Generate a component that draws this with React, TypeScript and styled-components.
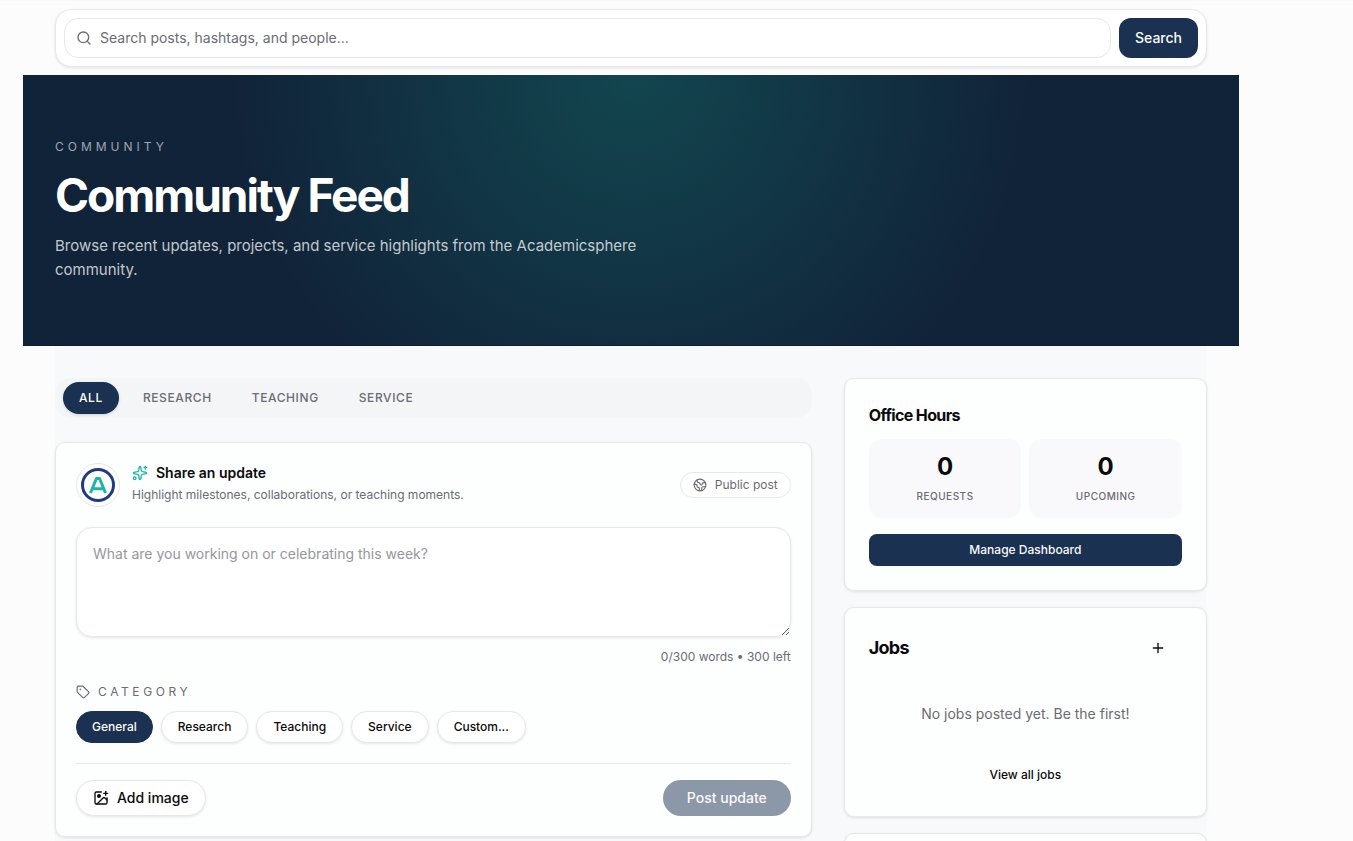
import React from "react";
import styled, { createGlobalStyle, css } from "styled-components";
import { Earth, ImagePlus, Plus, Search, Sparkles, Tag } from "lucide-react";

const navy = "#1a3152";
const ink = "#0a0a0c";
const muted = "#6b6b74";
const line = "#e8e8ea";

const GlobalStyle = createGlobalStyle`
  *, *::before, *::after { box-sizing: border-box; }
  body {
    margin: 0;
    background: #fcfcfc;
    color: ${ink};
    font-family: Inter, "Liberation Sans", sans-serif;
    font-size: 14px;
    line-height: 20px;
  }
  h1, h2, p { margin: 0; }
  button, input, textarea { font: inherit; color: inherit; }
  button { cursor: pointer; border: 0; }
`;

const Page = styled.div`
  height: 100vh;
  overflow-y: auto;
  scrollbar-width: none;
  padding: 8px 91px 0 0;
  border-top: 1px solid #f8f8f8;
`;

const Container = styled.main`
  max-width: 1216px;
  margin: 0 auto;
`;

const SearchBar = styled.form`
  display: flex;
  gap: 8px;
  margin: 0 32px 8px;
  padding: 8px;
  border: 1px solid ${line};
  border-radius: 16px;
  background: #fff;
  box-shadow: 0 1px 3px rgba(0, 0, 0, 0.1);
`;

const SearchField = styled.label`
  flex: 1;
  display: flex;
  align-items: center;
  gap: 8px;
  height: 40px;
  padding: 0 11px;
  border: 1px solid ${line};
  border-radius: 14px;
  color: ${muted};
`;

const SearchInput = styled.input`
  flex: 1;
  min-width: 0;
  padding: 0;
  border: 0;
  outline: 0;
  background: transparent;
  &::placeholder { color: ${muted}; opacity: 1; }
`;

const SearchButton = styled.button`
  padding: 0 16px;
  border-radius: 12px;
  background: ${navy};
  color: #fafafa;
  font-weight: 500;
`;

const Hero = styled.header`
  padding: 64px 32px 63px;
  border-bottom: 1px solid #0f1d33;
  background: radial-gradient(circle at top, #12464f, #112339 60%) #112339;
  color: #fff;
`;

const Eyebrow = styled.p`
  color: rgba(255, 255, 255, 0.6);
  font-size: 12px;
  line-height: 16px;
  letter-spacing: 4px;
  text-transform: uppercase;
`;

const HeroTitle = styled.h1`
  margin: 16px 0 15px;
  font-size: 46px;
  line-height: 48px;
  font-weight: 700;
  letter-spacing: -2px;
`;

const HeroText = styled.p`
  max-width: 640px;
  color: rgba(255, 255, 255, 0.75);
  font-size: 15px;
  line-height: 24px;
`;

const Content = styled.div`
  display: grid;
  grid-template-columns: minmax(0, 25fr) minmax(0, 12fr);
  align-items: start;
  gap: 32px;
  margin: 0 32px;
  padding: 32px 0;
  background: #f8f9fb;
`;

const Column = styled.div<{ $gap: number }>`
  display: flex;
  flex-direction: column;
  gap: ${(p) => p.$gap}px;
`;

const Tabs = styled.nav`
  display: flex;
  gap: 8px;
  padding: 4px 8px;
  border-radius: 16px;
  background: #f4f5f7;
`;

const TabButton = styled.button<{ $active?: boolean }>`
  height: 32px;
  padding: 0 16px;
  border-radius: 16px;
  background: transparent;
  color: ${muted};
  font-size: 12px;
  font-weight: 500;
  letter-spacing: 0.05em;
  text-transform: uppercase;
  ${(p) =>
    p.$active &&
    css`
      background: ${navy};
      color: #fff;
      box-shadow: 0 1px 3px rgba(0, 0, 0, 0.15);
    `}
`;

const Card = styled.section<{ $pad: number }>`
  padding: ${(p) => p.$pad}px;
  border: 1px solid ${line};
  border-radius: 10px;
  background: #fdfefe;
  box-shadow: 0 1px 3px rgba(0, 0, 0, 0.1);
`;

const ComposerHead = styled.div`
  display: flex;
  align-items: center;
  gap: 12px;
  margin-bottom: 20px;
`;

const Avatar = styled.span`
  display: flex;
  align-items: center;
  justify-content: center;
  width: 44px;
  height: 44px;
  border: 1px solid ${line};
  border-radius: 50%;
  background: #fff;
`;

const ComposerIntro = styled.div`
  flex: 1;
  align-self: flex-start;
`;

const ComposerTitle = styled.h2`
  display: flex;
  align-items: center;
  gap: 8px;
  margin-bottom: 4px;
  font-size: 14px;
  line-height: 20px;
  font-weight: 600;
  svg { color: #1fb9a5; }
`;

const SmallText = styled.p<{ $end?: boolean }>`
  color: ${muted};
  font-size: 12px;
  line-height: 16px;
  text-align: ${(p) => (p.$end ? "right" : "left")};
`;

const Visibility = styled.span`
  display: flex;
  align-items: center;
  gap: 8px;
  padding: 4px 12px;
  border: 1px solid ${line};
  border-radius: 16px;
  background: #fff;
  color: ${muted};
  font-size: 12px;
  line-height: 16px;
`;

const UpdateInput = styled.textarea`
  display: block;
  width: 100%;
  height: 110px;
  margin-bottom: 12px;
  padding: 16px;
  border: 1px solid ${line};
  border-radius: 16px;
  outline: 0;
  background: #fff;
  box-shadow: 0 1px 3px rgba(0, 0, 0, 0.1);
  resize: vertical;
  &::placeholder { color: #96969c; opacity: 1; }
`;

const CategoryLabel = styled.p`
  display: flex;
  align-items: center;
  gap: 8px;
  margin: 19px 0 11px;
  color: ${muted};
  font-size: 12px;
  line-height: 16px;
  letter-spacing: 0.3em;
  text-transform: uppercase;
`;

const Chips = styled.div`
  display: flex;
  flex-wrap: wrap;
  gap: 8px;
  margin-bottom: 20px;
`;

const Chip = styled.button<{ $active?: boolean }>`
  height: 32px;
  padding: 0 16px;
  border: 1px solid ${line};
  border-radius: 16px;
  background: #fff;
  box-shadow: 0 1px 3px rgba(0, 0, 0, 0.1);
  font-size: 12px;
  font-weight: 500;
  ${(p) =>
    p.$active &&
    css`
      padding: 0 15px;
      border-color: ${navy};
      background: ${navy};
      color: #fafafa;
      box-shadow: none;
    `}
`;

const ComposerActions = styled.div`
  display: flex;
  justify-content: space-between;
  padding-top: 16px;
  border-top: 1px solid ${line};
`;

const OutlineButton = styled.button`
  display: flex;
  align-items: center;
  gap: 8px;
  height: 36px;
  padding: 0 16px;
  border: 1px solid ${line};
  border-radius: 18px;
  background: #fff;
  box-shadow: 0 1px 3px rgba(0, 0, 0, 0.1);
  font-weight: 500;
  circle { fill: currentColor; }
`;

const PostButton = styled.button`
  height: 36px;
  padding: 0 24px;
  border-radius: 18px;
  background: #8c98a8;
  color: #fafafa;
  font-weight: 500;
  cursor: not-allowed;
`;

const PanelTitle = styled.h2<{ $large?: boolean }>`
  font-size: ${(p) => (p.$large ? 18 : 16)}px;
  line-height: 24px;
  font-weight: 700;
  letter-spacing: -0.04em;
`;

const Stats = styled.div`
  display: grid;
  grid-template-columns: 1fr 1fr;
  gap: 8px;
  margin: 12px 0 16px;
`;

const Stat = styled.div`
  padding: 12px 12px 14px;
  border-radius: 12px;
  background: #f9f9fb;
  text-align: center;
`;

const StatValue = styled.p`
  margin-bottom: 6px;
  font-size: 24px;
  line-height: 32px;
  font-weight: 700;
`;

const StatLabel = styled.p`
  color: ${muted};
  font-size: 10px;
  line-height: 15px;
  font-weight: 500;
  letter-spacing: 0.05em;
  text-transform: uppercase;
`;

const PrimaryButton = styled.button`
  display: block;
  width: 100%;
  height: 32px;
  border-radius: 8px;
  background: ${navy};
  color: #fafafa;
  font-size: 12px;
  font-weight: 500;
`;

const PanelHead = styled.div`
  display: flex;
  align-items: center;
  justify-content: space-between;
`;

const IconButton = styled.button`
  display: flex;
  align-items: center;
  justify-content: center;
  width: 48px;
  height: 32px;
  background: transparent;
`;

const EmptyText = styled.p`
  margin: 40px 0 35px;
  color: ${muted};
  text-align: center;
`;

const TextLink = styled.a`
  display: block;
  padding: 8px 8px 9px;
  color: inherit;
  font-size: 12px;
  line-height: 16px;
  font-weight: 500;
  text-align: center;
  text-decoration: none;
`;

const Logo = () => (
  <svg width="34" height="34" viewBox="0 0 34 34" fill="none" aria-hidden="true">
    <circle cx="17" cy="17" r="15.5" stroke="#1f3b82" strokeWidth="3" />
    <path d="M9.5 25 L15.4 10.5 H18.6 L24.5 25 M12 20.8 H22" stroke="#1fb5a6" strokeWidth="3" strokeLinejoin="round" />
  </svg>
);

const tabs = ["All", "Research", "Teaching", "Service"];
const categories = ["General", "Research", "Teaching", "Service", "Custom..."];

export default function App() {
  return (
    <Page>
      <GlobalStyle />
      <Container>
        <SearchBar onSubmit={(e) => e.preventDefault()}>
          <SearchField>
            <Search size={16} />
            <SearchInput aria-label="Search" placeholder="Search posts, hashtags, and people..." />
          </SearchField>
          <SearchButton type="submit">Search</SearchButton>
        </SearchBar>

        <Hero>
          <Eyebrow>Community</Eyebrow>
          <HeroTitle>Community Feed</HeroTitle>
          <HeroText>
            Browse recent updates, projects, and service highlights from the Academicsphere community.
          </HeroText>
        </Hero>

        <Content>
          <Column $gap={24}>
            <Tabs>
              {tabs.map((tab, i) => (
                <TabButton key={tab} type="button" $active={i === 0}>
                  {tab}
                </TabButton>
              ))}
            </Tabs>

            <Card $pad={20}>
              <ComposerHead>
                <Avatar>
                  <Logo />
                </Avatar>
                <ComposerIntro>
                  <ComposerTitle>
                    <Sparkles size={16} />
                    Share an update
                  </ComposerTitle>
                  <SmallText>Highlight milestones, collaborations, or teaching moments.</SmallText>
                </ComposerIntro>
                <Visibility>
                  <Earth size={14} />
                  Public post
                </Visibility>
              </ComposerHead>
              <UpdateInput aria-label="Update" placeholder="What are you working on or celebrating this week?" />
              <SmallText $end>0/300 words • 300 left</SmallText>
              <CategoryLabel>
                <Tag size={14} />
                Category
              </CategoryLabel>
              <Chips>
                {categories.map((name, i) => (
                  <Chip key={name} type="button" $active={i === 0}>
                    {name}
                  </Chip>
                ))}
              </Chips>
              <ComposerActions>
                <OutlineButton type="button">
                  <ImagePlus size={16} />
                  Add image
                </OutlineButton>
                <PostButton type="button" disabled>
                  Post update
                </PostButton>
              </ComposerActions>
            </Card>
          </Column>

          <Column $gap={16}>
            <Card $pad={24}>
              <PanelTitle>Office Hours</PanelTitle>
              <Stats>
                <Stat>
                  <StatValue>0</StatValue>
                  <StatLabel>Requests</StatLabel>
                </Stat>
                <Stat>
                  <StatValue>0</StatValue>
                  <StatLabel>Upcoming</StatLabel>
                </Stat>
              </Stats>
              <PrimaryButton type="button">Manage Dashboard</PrimaryButton>
            </Card>

            <Card $pad={24}>
              <PanelHead>
                <PanelTitle $large>Jobs</PanelTitle>
                <IconButton type="button" aria-label="Add job">
                  <Plus size={16} />
                </IconButton>
              </PanelHead>
              <EmptyText>No jobs posted yet. Be the first!</EmptyText>
              <TextLink href="#jobs">View all jobs</TextLink>
            </Card>

            <Card $pad={24} aria-label="More" />
          </Column>
        </Content>
      </Container>
    </Page>
  );
}
